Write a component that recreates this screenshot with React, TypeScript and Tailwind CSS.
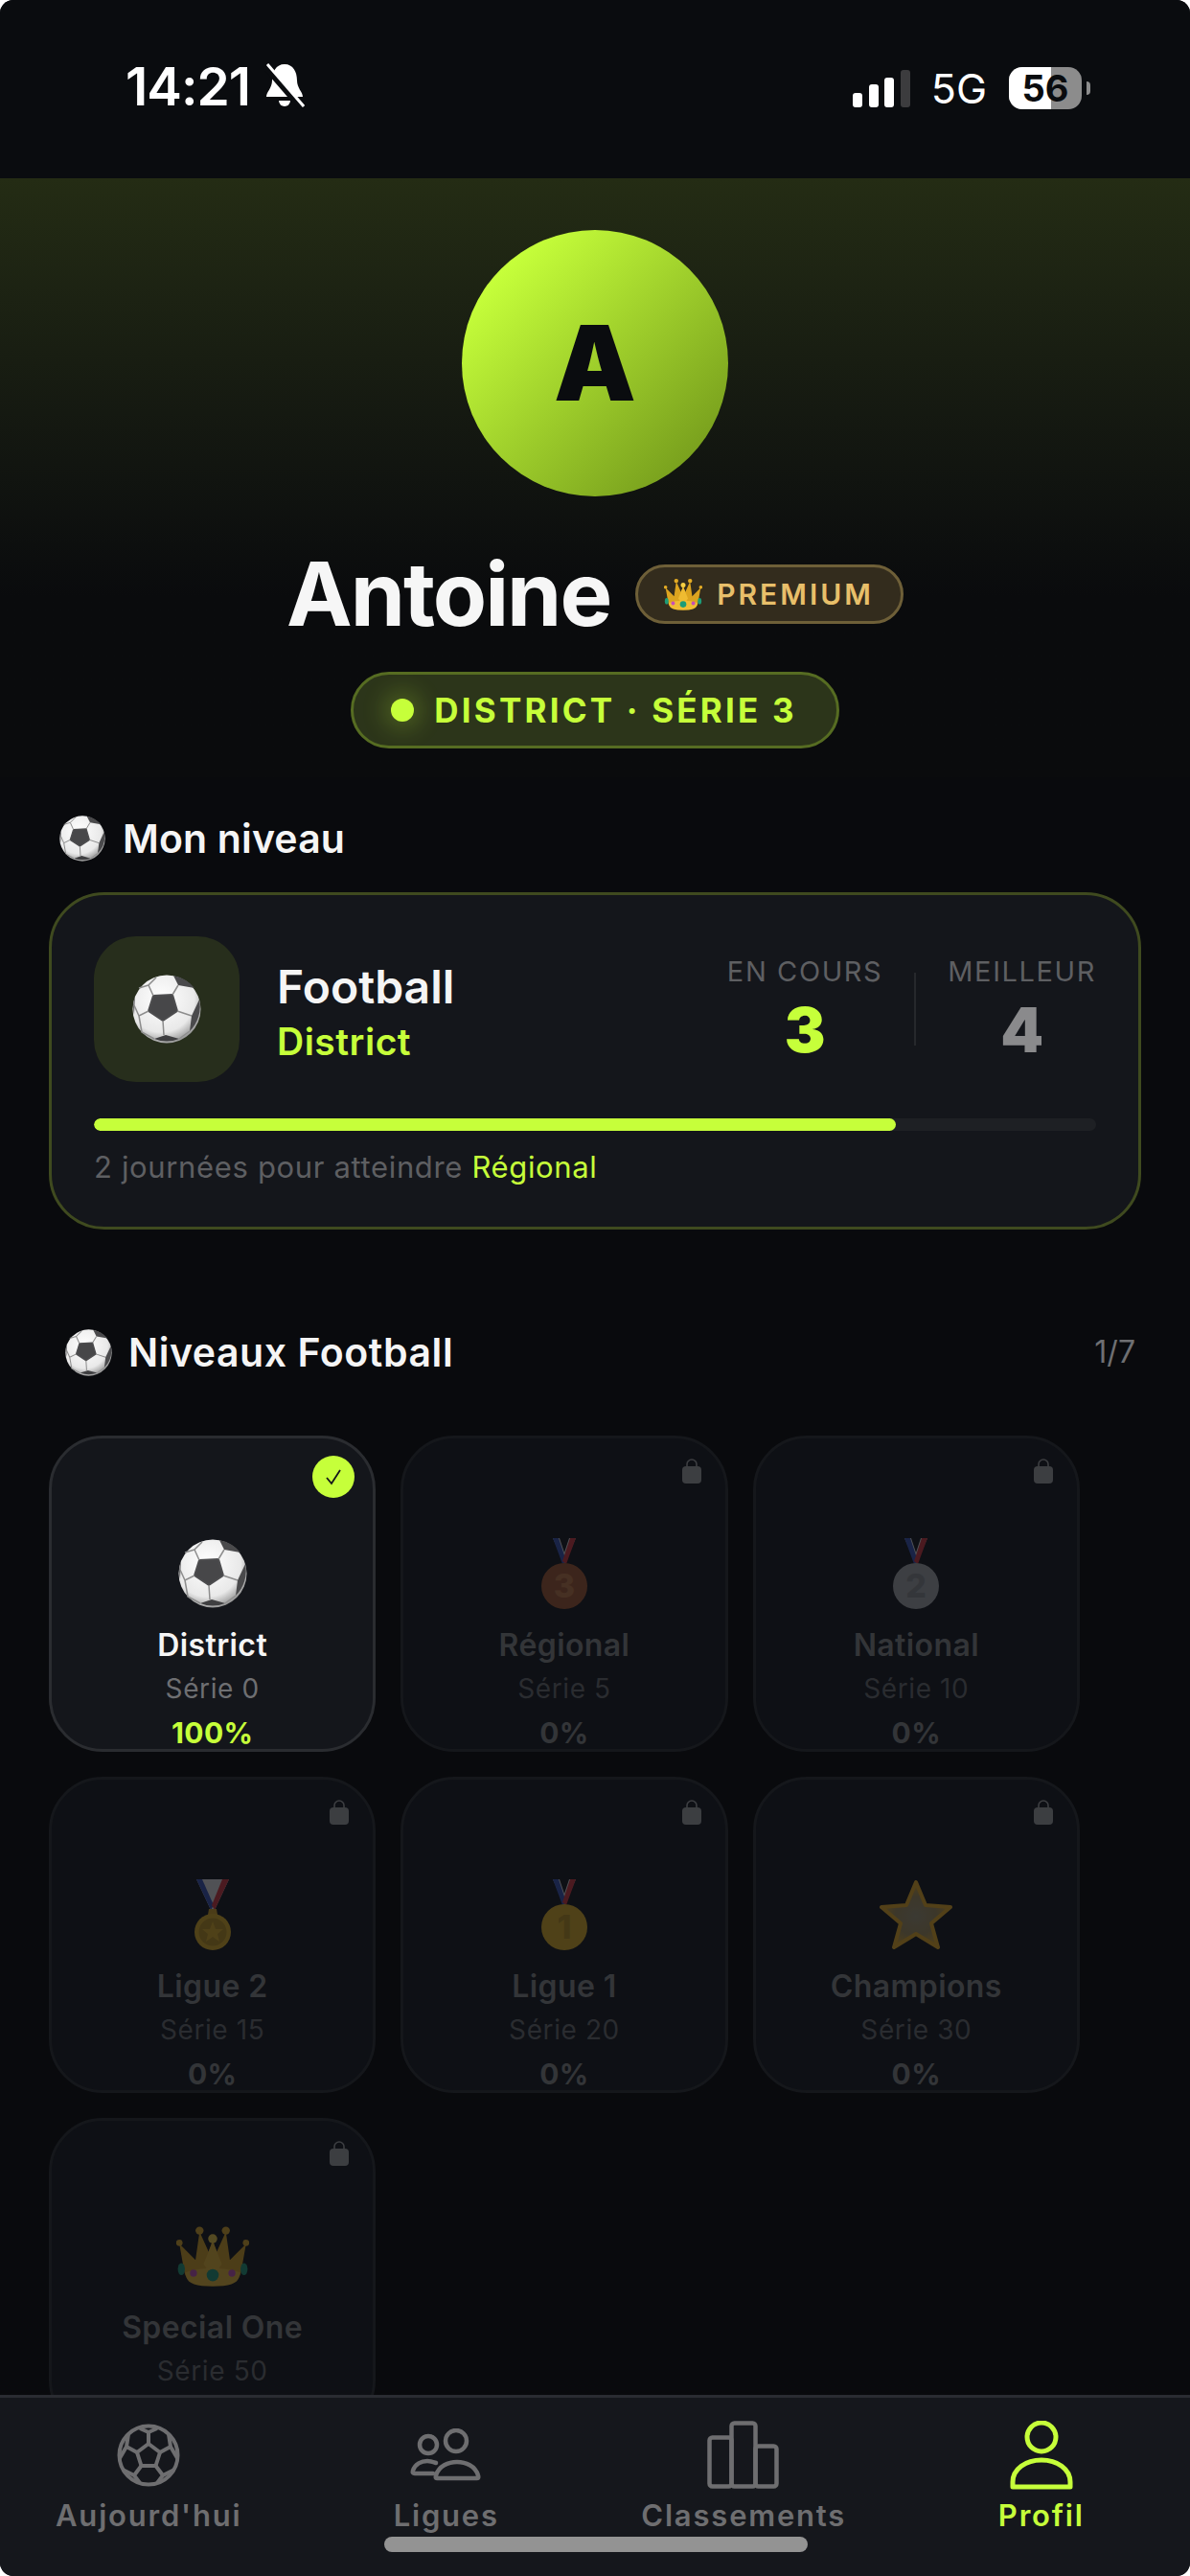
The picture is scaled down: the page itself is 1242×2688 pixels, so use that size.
const LIME = '#c6ff3a';

function Ball({ size }: { size: number }) {
  return (
    <svg width={size} height={size} viewBox="0 0 72 72" className="block shrink-0">
      <defs>
        <radialGradient id="ballShade" cx="42%" cy="35%" r="68%">
          <stop offset="0%" stopColor="#ffffff" />
          <stop offset="72%" stopColor="#e9e9e9" />
          <stop offset="100%" stopColor="#8f8f8f" />
        </radialGradient>
      </defs>
      <circle cx="36" cy="36" r="35.5" fill="url(#ballShade)" />
      <path d="M22 22 L42 21 L47 38 L32 48 L17 38 Z" fill="#474749" stroke="#4d4d4f" strokeWidth="2" strokeLinejoin="round" />
      <path d="M43 1 L48 11 L65 14 A36 36 0 0 0 43 1 Z" fill="#4a4a4c" />
      <path d="M70 26 L62 43 L60 59 A36 36 0 0 0 70 26 Z" fill="#4a4a4c" />
      <path d="M23 67 L35 63 L49 67 A36 36 0 0 1 23 67 Z" fill="#3f3f41" />
      <path d="M3 22 L2 42 A36 36 0 0 1 3 22 Z" fill="#6a6a6c" />
      <path
        d="M22 22 L17 11 L25 3 M17 11 L7 14 M42 21 L48 11 M47 38 L62 43 M32 48 L33 63 M17 38 L7 43 L2 32 M7 43 L10 60 L23 67 M49 67 L60 59"
        stroke="#8d8d8d"
        strokeWidth="1.5"
        fill="none"
      />
    </svg>
  );
}

function Crown({ size }: { size: number }) {
  return (
    <svg width={size} height={size} viewBox="0 0 72 72" className="block shrink-0">
      <path d="M3 24 L8 52 Q10 65 36 65 Q62 65 64 52 L69 24 L53 40 L49 12 L40 32 L36 21 L32 32 L23 12 L19 40 Z" fill="#dca41f" />
      <path d="M36 21 L27 44 L36 58 L45 44 Z" fill="#efbb31" />
      <path d="M9 52 Q36 44 63 52 L62 57 Q60 66 36 66 Q12 66 10 57 Z" fill="#f0bd33" />
      <circle cx="36" cy="19" r="4.5" fill="#f7cf42" />
      <circle cx="23" cy="11" r="4" fill="#e3ab25" />
      <circle cx="49" cy="11" r="4" fill="#e3ab25" />
      <circle cx="3" cy="23" r="3.2" fill="#e3ab25" />
      <circle cx="69" cy="23" r="3.2" fill="#e3ab25" />
      <ellipse cx="36" cy="55" rx="6" ry="6" fill="#1c9c78" />
      <ellipse cx="5" cy="49" rx="3.5" ry="6" fill="#1c9c78" />
      <ellipse cx="67" cy="49" rx="3.5" ry="6" fill="#1c9c78" />
      <circle cx="17" cy="53" r="3.5" fill="#c74fb8" />
      <circle cx="55" cy="53" r="3.5" fill="#c74fb8" />
    </svg>
  );
}

function Medal({ place, fill, digit }: { place: string; fill: string; digit: string }) {
  return (
    <svg width={72} height={74} viewBox="0 0 72 74" className="block shrink-0">
      <path d="M24 0 L36 27 L48 0 H41 L36 15 L31 0 Z" fill="#e8e8e8" />
      <path d="M24 0 H30 L38 24 L34 27 Z" fill="#3450b8" />
      <path d="M48 0 H42 L34 24 L38 27 Z" fill="#d8323a" />
      <circle cx="36" cy="50" r="24" fill={fill} />
      <text x="36" y="62" textAnchor="middle" fontSize="34" fontWeight="800" fill={digit} fontFamily="Inter, sans-serif">{place}</text>
    </svg>
  );
}

// the plain sports medal: ribbon with a white V, star in the middle
function StarMedal() {
  return (
    <svg width={72} height={74} viewBox="0 0 72 74" className="block shrink-0">
      <path d="M19 0 H53 L38 32 H34 Z" fill="#e8e8e8" />
      <path d="M19 0 H25 L37 27 L34 32 Z" fill="#3450b8" />
      <path d="M53 0 H46 L35 27 L38 32 Z" fill="#d8323a" />
      <path d="M32 31 H40 L41 37 H31 Z" fill="#d9a11f" />
      <circle cx="36" cy="55" r="19" fill="#e6b422" />
      <circle cx="36" cy="55" r="14.5" fill="#c0941a" />
      <path d="M36 44 L39 52 L47 52 L41 57 L43 65 L36 60 L29 65 L31 57 L25 52 L33 52 Z" fill="#e6b422" />
    </svg>
  );
}

function Star() {
  return (
    <svg width={80} height={76} viewBox="0 0 80 76" className="block shrink-0">
      <defs>
        <radialGradient id="starFill" cx="50%" cy="52%" r="55%">
          <stop offset="0%" stopColor="#a39a78" />
          <stop offset="55%" stopColor="#a8925a" />
          <stop offset="100%" stopColor="#efb020" />
        </radialGradient>
      </defs>
      <path
        d="M40 4 L50 28 L76 30 L56 47 L63 72 L40 58 L17 72 L24 47 L4 30 L30 28 Z"
        fill="url(#starFill)"
        stroke="#efb020"
        strokeWidth="4"
        strokeLinejoin="round"
      />
    </svg>
  );
}

function Lock() {
  return (
    <svg width={20} height={26} viewBox="0 0 20 26" className="block">
      <path d="M5 10 V6 a5 5 0 0 1 10 0 V10" fill="none" stroke="#a8a8a8" strokeWidth="1.6" />
      <rect x="0" y="8" width="20" height="18" rx="4" fill="#a8a8a8" />
    </svg>
  );
}

type Level = { name: string; serie: string; pct: string; icon: React.ReactNode };

const lockedLevels: Level[] = [
  { name: 'Régional', serie: 'Série 5', pct: '0%', icon: <Medal place="3" fill="#a8582c" digit="#c77a45" /> },
  { name: 'National', serie: 'Série 10', pct: '0%', icon: <Medal place="2" fill="#a9abad" digit="#8c8e90" /> },
  { name: 'Ligue 2', serie: 'Série 15', pct: '0%', icon: <StarMedal /> },
  { name: 'Ligue 1', serie: 'Série 20', pct: '0%', icon: <Medal place="1" fill="#e6b422" digit="#c0941a" /> },
  { name: 'Champions', serie: 'Série 30', pct: '0%', icon: <Star /> },
  { name: 'Special One', serie: 'Série 50', pct: '0%', icon: <Crown size={76} /> },
];

function LevelCard({ level, active }: { level: Level; active?: boolean }) {
  return (
    <div
      className={
        active
          ? 'relative h-[330px] rounded-[56px] border-[3px] border-[#2a2c30] bg-[#14161b] flex flex-col items-center pt-[105px]'
          : 'relative h-[330px] rounded-[56px] border-[3px] border-[#15171b] bg-[#0e1015] flex flex-col items-center pt-[105px]'
      }
    >
      {active ? (
        <div className="absolute top-[18px] right-[19px] w-[44px] h-[44px] rounded-full bg-[#c6ff3a] flex items-center justify-center">
          <svg width="22" height="22" viewBox="0 0 22 22" fill="none" stroke="#14161b" strokeWidth="1.8">
            <path d="M4 12 L9 18 L18 4" />
          </svg>
        </div>
      ) : (
        <div className="absolute top-[21px] right-[25px] opacity-30">
          <Lock />
        </div>
      )}
      <div className={active ? 'h-[72px] flex items-center' : 'h-[72px] flex items-center opacity-30'}>{level.icon}</div>
      <div className={active ? 'mt-[20px] text-[32px] leading-[38px] font-semibold tracking-[0.4px] text-[#f5f5f5]' : 'mt-[20px] text-[32px] leading-[38px] font-semibold tracking-[0.4px] text-[#333538]'}>
        {level.name}
      </div>
      <div className={active ? 'mt-[9px] text-[28px] leading-[34px] text-[#6e6f72] tracking-[0.6px]' : 'mt-[9px] text-[28px] leading-[34px] text-[#2a2c30] tracking-[0.6px]'}>
        {level.serie}
      </div>
      <div className={active ? 'mt-[12px] text-[30px] leading-[34px] font-bold tracking-[0.4px] text-[#c6ff3a]' : 'mt-[12px] text-[30px] leading-[34px] font-bold tracking-[0.4px] text-[#333538]'}>
        {level.pct}
      </div>
    </div>
  );
}

function NavItem({ label, active, children }: { label: string; active?: boolean; children: React.ReactNode }) {
  return (
    <div className="flex flex-col items-center">
      <div className="h-[76px] flex items-center justify-center">{children}</div>
      <div
        className={
          active
            ? 'mt-[5px] text-[31px] leading-[40px] font-semibold tracking-[1.8px] text-[#c6ff3a]'
            : 'mt-[5px] text-[31px] leading-[40px] font-semibold tracking-[1.8px] text-[#6e6e70]'
        }
      >
        {label}
      </div>
    </div>
  );
}

export default function App() {
  return (
    <div className="relative w-[1242px] h-[2688px] overflow-hidden bg-[#090a0d] font-['Inter',sans-serif] rounded-[14px]">
      {/* status bar */}
      <div className="h-[186px] bg-[#0a0c0f] flex items-start justify-between pt-[62px] pl-[131px] pr-[104px]">
        <div className="flex items-center gap-[15px]">
          <span className="text-[55px] leading-[56px] font-semibold text-white tracking-[-1px]">14:21</span>
          <svg width="42" height="48" viewBox="0 0 42 48" fill="white">
            <path d="M21 1 c9 0 13 8 13 17 c0 8 6 12 6 17 H2 c0 -5 6 -9 6 -17 C8 9 12 1 21 1 Z" />
            <path d="M15 39 h12 a6 6 0 0 1 -12 0 Z" />
            <path d="M1 3 L39 47" stroke="#0a0c0f" strokeWidth="7" />
            <path d="M3 1 L41 45" stroke="white" strokeWidth="3" />
          </svg>
        </div>
        <div className="flex items-center mt-[8px]">
          <div className="flex items-end gap-[6.5px] h-[39px]">
            <div className="w-[10px] h-[15px] rounded-[3px] bg-white" />
            <div className="w-[10px] h-[24px] rounded-[3px] bg-white" />
            <div className="w-[10px] h-[31px] rounded-[3px] bg-white" />
            <div className="w-[10px] h-[39px] rounded-[3px] bg-[#3c3c3e]" />
          </div>
          <span className="ml-[22px] text-[43px] leading-[44px] text-white">5G</span>
          <div className="ml-[23px] flex items-center gap-[5px]">
            <div className="relative w-[76px] h-[44px] rounded-[14px] bg-[#8c8c8c] overflow-hidden flex items-center justify-center">
              <div className="absolute left-0 top-0 bottom-0 w-[44px] bg-white" />
              <span className="relative text-[38px] leading-[38px] font-bold text-[#0a0c0f]">56</span>
            </div>
            <div className="w-[4px] h-[14px] rounded-r-full bg-[#8c8c8c]" />
          </div>
        </div>
      </div>

      {/* profile header */}
      <div className="bg-gradient-to-b from-[#242c14] to-[#0a0b0d] to-[70%] flex flex-col items-center pt-[54px] pb-[30px]">
        <div className="shrink-0 w-[278px] h-[278px] rounded-full bg-gradient-to-br from-[#c6ff3a] from-[15%] to-[#6b8f18] flex items-center justify-center">
          <span className="-mt-[1px] text-[108px] leading-none font-black text-[#0a0c0f]">A</span>
        </div>
        <div className="mt-[56px] flex items-center gap-[26px]">
          <span className="text-[92px] leading-[92px] font-bold tracking-[-2px] text-[#f6f6f6]">Antoine</span>
          <div className="h-[62px] rounded-full border-[3px] border-[#6e5f38] bg-[#332c1d] flex items-center gap-[15px] pl-[27px] pr-[28px]">
            <Crown size={40} />
            <span className="text-[30px] font-semibold tracking-[3px] text-[#e8bf6a]">PREMIUM</span>
          </div>
        </div>
        <div className="mt-[35px] h-[80px] rounded-full border-[3px] border-[#566c22] bg-[#2c351a] flex items-center gap-[21px] pl-[39px] pr-[41px]">
          <div className="w-[24px] h-[24px] rounded-full bg-[#c6ff3a] shadow-[0_0_24px_8px_rgba(198,255,58,0.2)]" />
          <span className="text-[35px] font-bold tracking-[3.2px] text-[#c6ff3a]">DISTRICT · SÉRIE 3</span>
        </div>
      </div>

      {/* mon niveau */}
      <div className="px-[51px]">
        <div className="flex items-center gap-[18px] pl-[11px] mt-[40px] h-[48px]">
          <Ball size={48} />
          <span className="text-[41px] leading-[48px] font-semibold tracking-[0.15px] text-[#f5f5f5]">Mon niveau</span>
        </div>
        <div className="mt-[32px] h-[352px] rounded-[58px] border-[3px] border-[#3f4a1f] bg-[#14161b] px-[44px] pt-[43px]">
          <div className="flex items-center">
            <div className="w-[152px] h-[152px] rounded-[44px] bg-[#272e1c] flex items-center justify-center">
              <Ball size={72} />
            </div>
            <div className="ml-[39px] flex-1">
              <div className="mt-[6px] text-[48px] leading-[56px] font-semibold text-[#f5f5f5]">Football</div>
              <div className="mt-[6px] text-[39px] leading-[46px] font-semibold tracking-[0.5px] text-[#c6ff3a]">District</div>
            </div>
            <div className="flex flex-col items-center">
              <div className="text-[29px] leading-[36px] tracking-[1.6px] text-[#5e5f62]">EN COURS</div>
              <div className="mt-[7px] text-[64px] leading-[72px] font-black text-[#c6ff3a]">3</div>
            </div>
            <div className="w-[2px] h-[76px] bg-[#26282c] mx-[33px]" />
            <div className="flex flex-col items-center">
              <div className="text-[29px] leading-[36px] tracking-[1.6px] text-[#5e5f62]">MEILLEUR</div>
              <div className="mt-[7px] text-[64px] leading-[72px] font-black text-[#8a8a8c]">4</div>
            </div>
          </div>
          <div className="mt-[38px] h-[13px] rounded-full bg-[#1e2024] overflow-hidden">
            <div className="h-full w-[80%] rounded-full bg-[#c6ff3a]" />
          </div>
          <div className="mt-[18px] text-[31px] leading-[40px] tracking-[0.65px] text-[#5e5f62]">
            2 journées pour atteindre <span className="text-[#c6ff3a]">Régional</span>
          </div>
        </div>

        {/* niveaux */}
        <div className="mt-[103px] flex items-center justify-between pl-[17px]">
          <div className="flex items-center gap-[17px]">
            <Ball size={49} />
            <span className="text-[41px] leading-[50px] font-semibold tracking-[0.55px] text-[#f5f5f5]">Niveaux Football</span>
          </div>
          <span className="text-[32px] text-[#6e6f72] mr-[6px]">1/7</span>
        </div>
        <div className="mt-[62px] grid grid-cols-3 gap-[26px] w-[1076px]">
          <LevelCard active level={{ name: 'District', serie: 'Série 0', pct: '100%', icon: <Ball size={72} /> }} />
          {lockedLevels.map((level) => (
            <LevelCard key={level.name} level={level} />
          ))}
        </div>
      </div>

      {/* tab bar */}
      <div className="absolute left-0 right-0 bottom-0 h-[189px] border-t-[3px] border-[#2a2c32] bg-[#15171c] grid grid-cols-4 pt-[22px]">
        <NavItem label="Aujourd'hui">
          <svg width="66" height="66" viewBox="0 0 66 66" fill="none" stroke="#6e6e70" strokeWidth="4" strokeLinejoin="round">
            <circle cx="33" cy="33" r="30.5" />
            <path d="M33 21 L45 30 L40.5 44 H25.5 L21 30 Z" />
            <path d="M33 21 V9 M24 5 L33 9 L42 5 M45 30 L56 24 M56 24 L54 11 M56 24 L63 36 M21 30 L10 24 M10 24 L12 11 M10 24 L3 36 M40.5 44 L48 54 M48 54 L60 48 M48 54 L42 62 M25.5 44 L18 54 M18 54 L6 48 M18 54 L24 62" />
          </svg>
        </NavItem>
        <NavItem label="Ligues">
          <svg width="76" height="56" viewBox="0 0 76 56" fill="none" stroke="#6e6e70" strokeWidth="4.5" strokeLinejoin="round" strokeLinecap="round">
            <circle cx="19" cy="17" r="9" />
            <circle cx="48" cy="13" r="11" />
            <path d="M24 47 H5 Q2 47 3 44 C5 37 12 34 18 34 C21 34 24 35 27 36" />
            <path d="M28 52 H70 Q72 52 71 49 C68 39 58 35 49 35 C40 35 30 39 27 49 Q26 52 28 52 Z" />
          </svg>
        </NavItem>
        <NavItem label="Classements">
          <svg width="76" height="72" viewBox="0 0 76 72" fill="none" stroke="#6e6e70" strokeWidth="4.5" strokeLinejoin="round">
            <rect x="2.5" y="17.5" width="23" height="51" rx="3" />
            <rect x="25.5" y="2.5" width="25" height="66" rx="3" />
            <rect x="50.5" y="26.5" width="22" height="42" rx="3" />
          </svg>
        </NavItem>
        <NavItem label="Profil" active>
          <svg width="66" height="72" viewBox="0 0 66 72" fill="none" stroke={LIME} strokeWidth="5" strokeLinejoin="round">
            <circle cx="33" cy="17" r="15" />
            <path d="M3 69 V64 C3 50 17 41 33 41 C49 41 63 50 63 64 V69 Z" />
          </svg>
        </NavItem>
      </div>

      {/* home indicator */}
      <div className="absolute left-[401px] bottom-[25px] w-[442px] h-[16px] rounded-full bg-[#939393]" />
    </div>
  );
}
